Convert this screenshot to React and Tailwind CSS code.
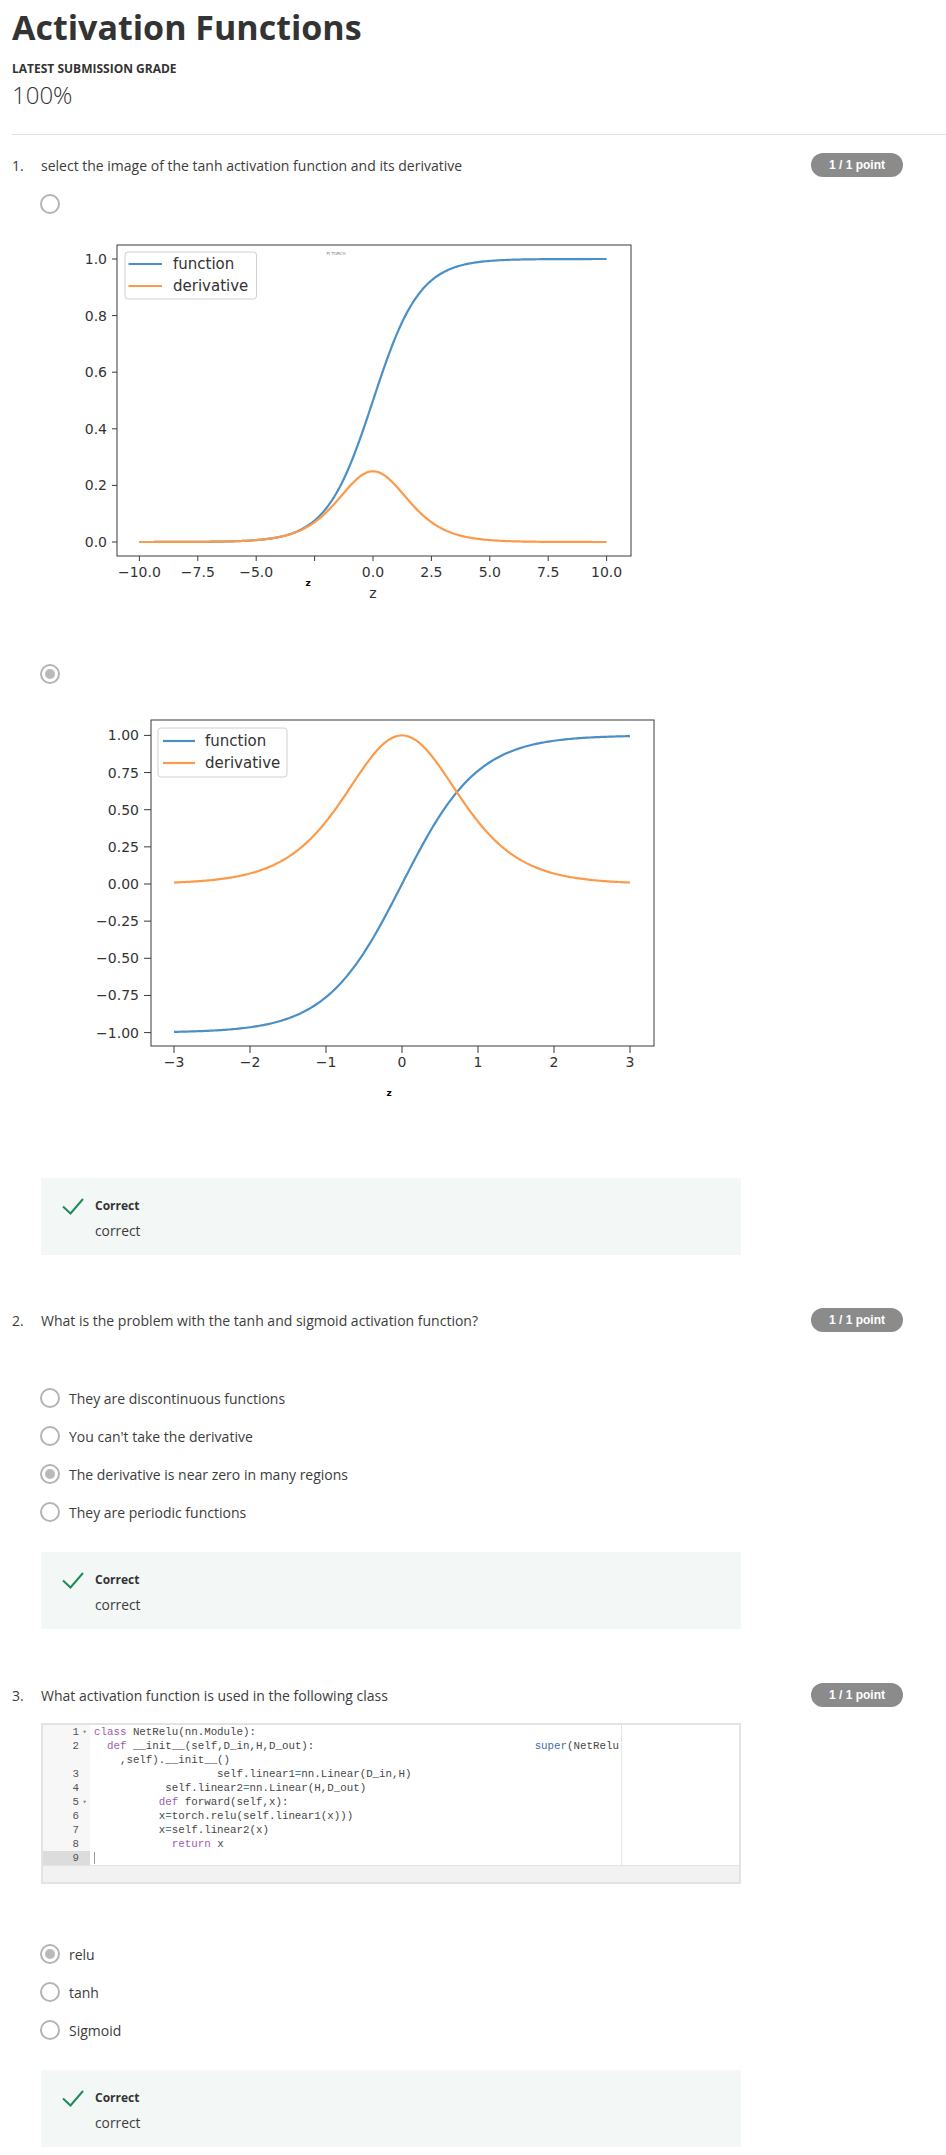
import React from "react";

const sig = (z) => 1 / (1 + Math.exp(-z));
const dsig = (z) => sig(z) * (1 - sig(z));
const tanh = (z) => Math.tanh(z);
const dtanh = (z) => 1 - Math.tanh(z) ** 2;

function makePath(f, z0, z1, X, Y, n = 240) {
  let d = "";
  for (let i = 0; i <= n; i++) {
    const z = z0 + ((z1 - z0) * i) / n;
    d += (i === 0 ? "M" : "L") + X(z).toFixed(2) + " " + Y(f(z)).toFixed(2) + " ";
  }
  return d;
}

const BLUE = "#4a8fc6";
const ORANGE = "#fd9a4a";
const AX = "#3a3a3a";

function Chart1() {
  const X = (z) => 333 + 23.36 * z;
  const Y = (v) => 307 - 283 * v;
  const yt = [0, 0.2, 0.4, 0.6, 0.8, 1.0];
  const xt = [
    [-10, "\u221210.0"],
    [-7.5, "\u22127.5"],
    [-5, "\u22125.0"],
    [-2.5, ""],
    [0, "0.0"],
    [2.5, "2.5"],
    [5, "5.0"],
    [7.5, "7.5"],
    [10, "10.0"],
  ];
  return (
    <svg width="620" height="370" viewBox="0 0 620 370" className="block" fontFamily="'DejaVu Sans', sans-serif">
      <path d={makePath(sig, -10, 10, X, Y)} fill="none" stroke={BLUE} strokeWidth="2.2" />
      <path d={makePath(dsig, -10, 10, X, Y)} fill="none" stroke={ORANGE} strokeWidth="2.2" />
      <rect x="77" y="10" width="514" height="311" fill="none" stroke={AX} strokeWidth="1" />
      {yt.map((v) => (
        <g key={v}>
          <line x1="72" x2="77" y1={Y(v)} y2={Y(v)} stroke={AX} />
          <text x="67" y={Y(v)} dy="5" textAnchor="end" fontSize="14" fill="#333">
            {v.toFixed(1)}
          </text>
        </g>
      ))}
      {xt.map(([z, l]) => (
        <g key={z}>
          <line x1={X(z)} x2={X(z)} y1="321" y2="326" stroke={AX} />
          {l && (
            <text x={X(z)} y="342" textAnchor="middle" fontSize="14" fill="#333">
              {l}
            </text>
          )}
        </g>
      ))}
      <text x="268" y="351" textAnchor="middle" fontSize="9" fontWeight="bold" fill="#000">z</text>
      <text x="333" y="363" textAnchor="middle" fontSize="14" fill="#333">z</text>
      <text x="296" y="20" textAnchor="middle" fontSize="4" fill="#777">PI TORCH</text>
      <rect x="85" y="17" width="131.5" height="47" rx="3" fill="#fff" fillOpacity="0.85" stroke="#d0d0d0" />
      <line x1="88.5" x2="122" y1="29" y2="29" stroke={BLUE} strokeWidth="2.2" />
      <line x1="88.5" x2="122" y1="51" y2="51" stroke={ORANGE} strokeWidth="2.2" />
      <text x="133" y="34" fontSize="15" fill="#333">function</text>
      <text x="133" y="56" fontSize="15" fill="#333">derivative</text>
    </svg>
  );
}

function Chart2() {
  const X = (z) => 322 + 76 * z;
  const Y = (v) => 179 - 148.6 * v;
  const yt = [
    [1, "1.00"],
    [0.75, "0.75"],
    [0.5, "0.50"],
    [0.25, "0.25"],
    [0, "0.00"],
    [-0.25, "\u22120.25"],
    [-0.5, "\u22120.50"],
    [-0.75, "\u22120.75"],
    [-1, "\u22121.00"],
  ];
  const xt = [
    [-3, "\u22123"],
    [-2, "\u22122"],
    [-1, "\u22121"],
    [0, "0"],
    [1, "1"],
    [2, "2"],
    [3, "3"],
  ];
  return (
    <svg width="600" height="400" viewBox="0 0 600 400" className="block" fontFamily="'DejaVu Sans', sans-serif">
      <path d={makePath(tanh, -3, 3, X, Y)} fill="none" stroke={BLUE} strokeWidth="2.2" />
      <path d={makePath(dtanh, -3, 3, X, Y)} fill="none" stroke={ORANGE} strokeWidth="2.2" />
      <rect x="71" y="15" width="503" height="326" fill="none" stroke={AX} strokeWidth="1" />
      {yt.map(([v, l]) => (
        <g key={v}>
          <line x1="64" x2="71" y1={Y(v)} y2={Y(v)} stroke={AX} />
          <text x="59" y={Y(v)} dy="5" textAnchor="end" fontSize="14" fill="#333">
            {l}
          </text>
        </g>
      ))}
      {xt.map(([z, l]) => (
        <g key={z}>
          <line x1={X(z)} x2={X(z)} y1="341" y2="348" stroke={AX} />
          <text x={X(z)} y="362" textAnchor="middle" fontSize="14" fill="#333">
            {l}
          </text>
        </g>
      ))}
      <text x="309" y="391" textAnchor="middle" fontSize="9" fontWeight="bold" fill="#000">z</text>
      <rect x="78" y="23" width="129" height="49" rx="3" fill="#fff" fillOpacity="0.85" stroke="#d0d0d0" />
      <line x1="83" x2="115" y1="36" y2="36" stroke={BLUE} strokeWidth="2.2" />
      <line x1="83" x2="115" y1="58" y2="58" stroke={ORANGE} strokeWidth="2.2" />
      <text x="125" y="41" fontSize="15" fill="#333">function</text>
      <text x="125" y="63" fontSize="15" fill="#333">derivative</text>
    </svg>
  );
}

function Radio({ checked }) {
  return (
    <div className="w-[20px] h-[20px] shrink-0 rounded-full border-2 border-[#b4b4b4] bg-white flex items-center justify-center">
      {checked && <div className="w-[10px] h-[10px] rounded-full bg-[#b9b9b9]" />}
    </div>
  );
}

function Badge() {
  return (
    <div className="w-[92px] h-[24px] shrink-0 rounded-full bg-[#8b8b8b] flex items-center justify-center text-white text-[12px] font-bold font-['Liberation_Sans',Arial,sans-serif]">
      1 / 1 point
    </div>
  );
}

function QuestionRow({ num, text, className }) {
  return (
    <div className={"flex items-center h-[24px] pl-[12px] pr-[43px] " + className}>
      <div className="w-[29px] text-[14px] text-[#3c3c3c]">{num}</div>
      <div className="flex-1 text-[14px] text-[#3c3c3c]">{text}</div>
      <Badge />
    </div>
  );
}

function Option({ checked, label }) {
  return (
    <div className="flex items-center h-[20px] gap-[9px]">
      <Radio checked={checked} />
      <span className="text-[14px] text-[#3c3c3c]">{label}</span>
    </div>
  );
}

function CorrectBox({ className }) {
  return (
    <div className={"ml-[41px] w-[700px] h-[77px] bg-[#f3f8f6] pt-[20px] pl-[21px] flex " + className}>
      <svg width="22" height="17" viewBox="0 0 22 17" className="shrink-0">
        <path d="M1 8.5 L8.5 15.5 L21 1" fill="none" stroke="#1f8a5b" strokeWidth="2" />
      </svg>
      <div className="ml-[11px] flex flex-col">
        <div className="text-[12px] leading-[16px] font-bold text-[#333]">Correct</div>
        <div className="mt-[8px] text-[13.8px] leading-[18px] text-[#3c3c3c]">correct</div>
      </div>
    </div>
  );
}

const sp = (n) => " ".repeat(n);

const codeRows = [
  { n: "1", fold: true, parts: [["kw", "class"], ["t", " NetRelu(nn.Module):"]] },
  {
    n: "2",
    parts: [
      ["t", "  "],
      ["kw", "def"],
      ["t", " __init__(self,D_in,H,D_out):" + sp(34)],
      ["fn", "super"],
      ["t", "(NetRelu"],
    ],
  },
  { n: "", parts: [["t", "    ,self).__init__()"]] },
  { n: "3", parts: [["t", sp(19) + "self.linear1"], ["op", "="], ["t", "nn.Linear(D_in,H)"]] },
  { n: "4", parts: [["t", sp(11) + "self.linear2"], ["op", "="], ["t", "nn.Linear(H,D_out)"]] },
  { n: "5", fold: true, parts: [["t", sp(10)], ["kw", "def"], ["t", " forward(self,x):"]] },
  { n: "6", parts: [["t", sp(10) + "x"], ["op", "="], ["t", "torch.relu(self.linear1(x)))"]] },
  { n: "7", parts: [["t", sp(10) + "x"], ["op", "="], ["t", "self.linear2(x)"]] },
  { n: "8", parts: [["t", sp(12)], ["kw", "return"], ["t", " x"]] },
  { n: "9", active: true, parts: [] },
];

const colorFor = {
  kw: "text-[#9d5cb2]",
  fn: "text-[#3f6db3]",
  op: "text-[#3a8a8f]",
  t: "text-[#474747]",
};

function CodeEditor() {
  return (
    <div className="ml-[41px] w-[700px] border-2 border-[#e3e3e3] bg-white">
      <div className="relative font-['Liberation_Mono',monospace] text-[10.8px] leading-[14px]">
        {codeRows.map((r, i) => (
          <div key={i} className="flex h-[14px]">
            <div
              className={
                "w-[47px] shrink-0 flex justify-end items-center text-[#555] " +
                (r.active ? "bg-[#dcdcdc]" : "bg-[#f7f7f7]")
              }
            >
              <span>{r.n}</span>
              <span className="w-[11px] text-center text-[7px] text-[#777]">{r.fold ? "\u25BE" : ""}</span>
            </div>
            <div className="pl-[4px] whitespace-pre flex items-center">
              {r.active && <span className="inline-block w-px h-[12px] bg-[#9a9a9a]" />}
              {r.parts.map(([k, s], j) => (
                <span key={j} className={colorFor[k]}>
                  {s}
                </span>
              ))}
            </div>
          </div>
        ))}
        <div className="absolute top-0 bottom-0 left-[578px] w-px bg-[#e4e4e4]" />
      </div>
      <div className="h-[17px] bg-[#f2f2f2] border-t border-[#e3e3e3]" />
    </div>
  );
}

export default function App() {
  return (
    <div className="w-[946px] min-h-[2155px] bg-white text-[#333] font-['Open_Sans',sans-serif] pb-[8px]">
      <div className="pl-[12px] pt-[6px]">
        <h1 className="text-[34px] leading-[42px] font-bold text-[#333]">Activation Functions</h1>
        <div className="mt-[13px] text-[12px] leading-[16px] font-bold text-[#333] uppercase">Latest Submission Grade</div>
        <div className="mt-[2px] text-[24px] leading-[32px] font-light text-[#333]">100%</div>
        <div className="mt-[23px] border-t border-[#e1e1e1]" />
      </div>

      {/* Question 1 */}
      <QuestionRow num="1." text="select the image of the tanh activation function and its derivative" className="mt-[18px]" />
      <div className="pl-[40px] mt-[17px]">
        <Radio checked={false} />
        <div className="mt-[21px]">
          <Chart1 />
        </div>
        <div className="mt-[59px]">
          <Radio checked={true} />
        </div>
        <div className="ml-[40px] mt-[21px]">
          <Chart2 />
        </div>
      </div>
      <CorrectBox className="mt-[73px]" />

      {/* Question 2 */}
      <QuestionRow num="2." text="What is the problem with the tanh and sigmoid activation function?" className="mt-[53px]" />
      <div className="pl-[40px] mt-[56px] flex flex-col gap-[18px]">
        <Option label="They are discontinuous functions" />
        <Option label="You can't take the derivative" />
        <Option checked label="The derivative is near zero in many regions" />
        <Option label="They are periodic functions" />
      </div>
      <CorrectBox className="mt-[30px]" />

      {/* Question 3 */}
      <QuestionRow num="3." text="What activation function is used in the following class" className="mt-[54px]" />
      <div className="mt-[16px]">
        <CodeEditor />
      </div>
      <div className="pl-[40px] mt-[60px] flex flex-col gap-[18px]">
        <Option checked label="relu" />
        <Option label="tanh" />
        <Option label="Sigmoid" />
      </div>
      <CorrectBox className="mt-[30px]" />
    </div>
  );
}
